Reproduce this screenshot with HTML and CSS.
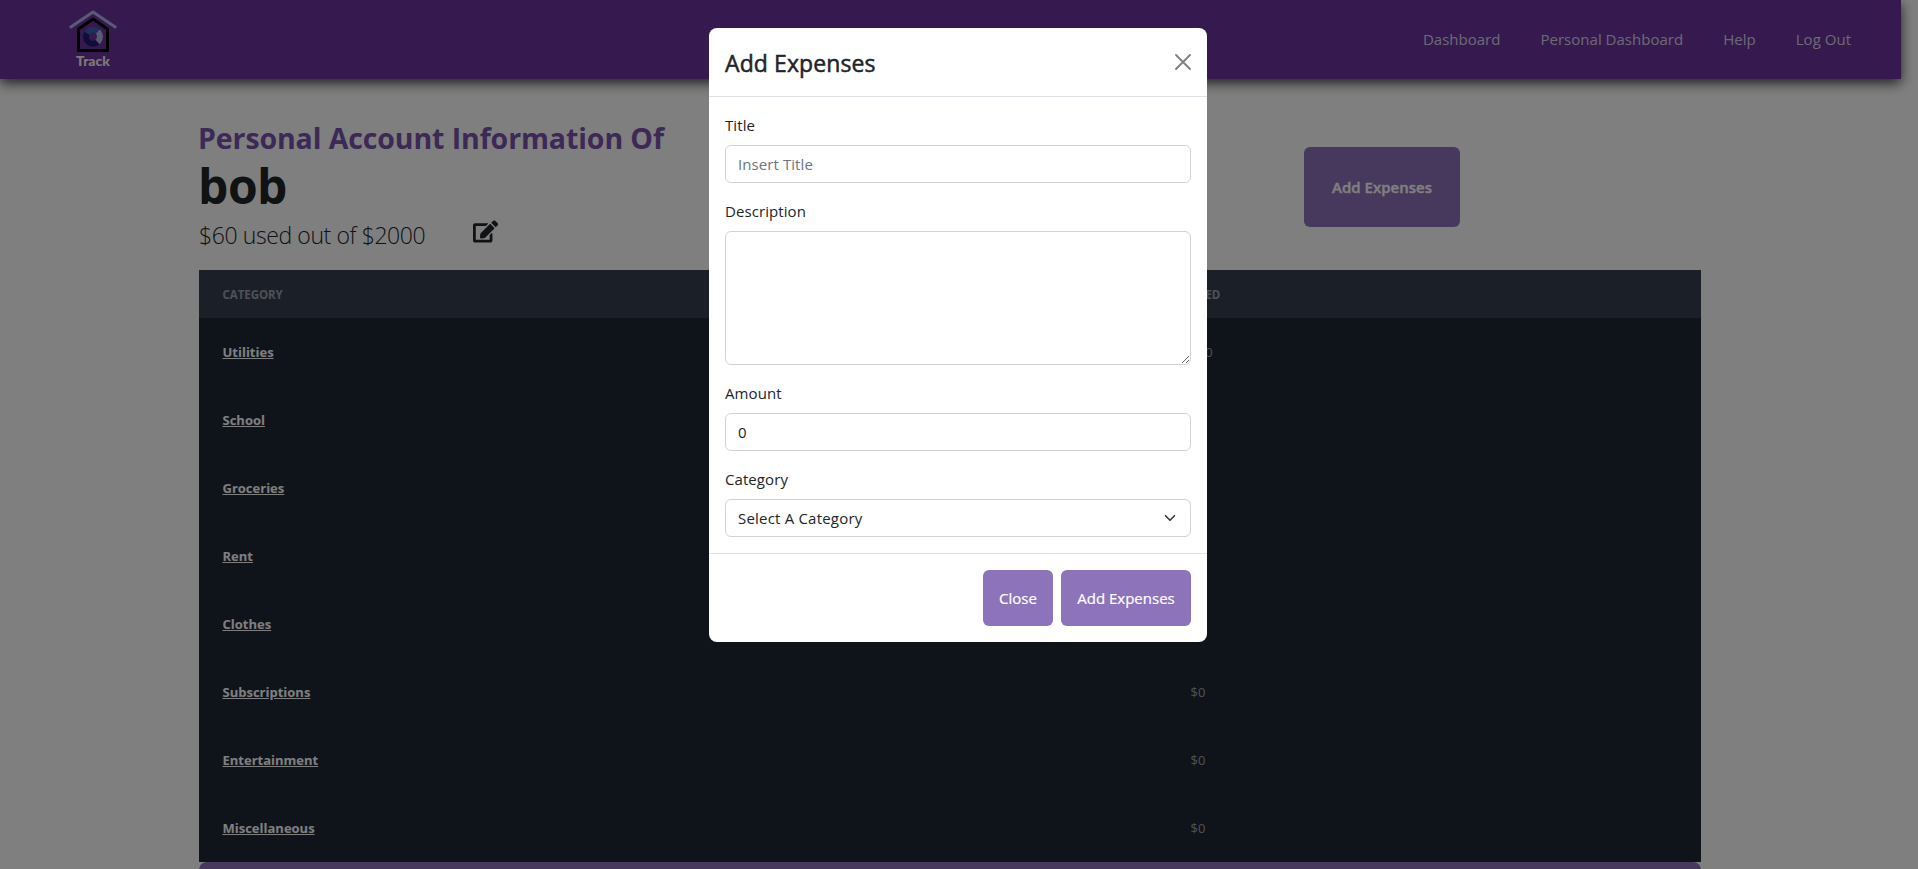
FILE: index.html
```html
<!DOCTYPE html>
<html lang="en">
<head>
<meta charset="utf-8">
<title>Track</title>
<link rel="stylesheet" href="styles.css">
</head>
<body>
<div class="page">
  <header class="navbar">
    <a class="brand" href="#">
      <svg width="50" height="44" viewBox="0 0 50 44" fill="none">
        <path d="M2.800 19 25 4l22.200 15" stroke="#b4b4ee" stroke-width="3" stroke-linecap="round" stroke-linejoin="round"/>
        <path d="M10.500 42.500V21L25 11l14.500 10v21.500z" stroke="#000" stroke-width="3" stroke-linejoin="round"/>
        <g stroke-width="6">
          <circle cx="25" cy="28.700" r="7" stroke="#1f1c70"/>
          <path d="M18.900 25.200A7 7 0 0 1 30 23.800" stroke="#3c60b8"/>
          <path d="M29.800 23.600A7 7 0 0 1 29.500 34" stroke="#b4b4ee"/>
        </g>
      </svg>
      <span class="brand-name">Track</span>
    </a>
    <nav class="links">
      <a href="#">Dashboard</a>
      <a href="#">Personal Dashboard</a>
      <a href="#">Help</a>
      <a href="#">Log Out</a>
    </nav>
  </header>
  <main class="account">
    <section class="summary">
      <div class="info">
        <h2 class="subtitle">Personal Account Information Of</h2>
        <h1 class="user">bob</h1>
        <div class="budget">
          <span class="usage">$60 used out of $2000</span>
          <svg class="edit" width="25" height="23" viewBox="0 0 576 512" fill="#212529"><path d="M402.600 83.200l90.200 90.200c3.800 3.800 3.800 10 0 13.800L274.400 405.600l-92.800 10.300c-12.400 1.400-22.900-9.100-21.500-21.500l10.300-92.800L388.800 83.200c3.800-3.800 10-3.800 13.800 0zm162-22.900l-48.800-48.800c-15.200-15.200-39.900-15.200-55.200 0l-35.400 35.400c-3.800 3.800-3.800 10 0 13.800l90.200 90.200c3.800 3.800 10 3.800 13.800 0l35.400-35.400c15.200-15.300 15.200-40 0-55.200zM384 346.200V448H64V128h229.800c3.200 0 6.200-1.300 8.500-3.500l40-40c7.600-7.600 2.200-20.500-8.500-20.500H48C21.500 64 0 85.500 0 112v352c0 26.500 21.500 48 48 48h352c26.500 0 48-21.500 48-48V306.200c0-10.700-12.900-16-20.500-8.500l-40 40c-2.200 2.300-3.500 5.300-3.500 8.500z"/></svg>
        </div>
      </div>
      <button class="btn-main">Add Expenses</button>
    </section>
    <table class="expenses">
      <thead><tr><th>Category</th><th class="used">Used</th></tr></thead>
      <tbody>
        <tr><td><a href="#">Utilities</a></td><td>$60</td></tr>
        <tr><td><a href="#">School</a></td><td>$0</td></tr>
        <tr><td><a href="#">Groceries</a></td><td>$0</td></tr>
        <tr><td><a href="#">Rent</a></td><td>$0</td></tr>
        <tr><td><a href="#">Clothes</a></td><td>$0</td></tr>
        <tr><td><a href="#">Subscriptions</a></td><td>$0</td></tr>
        <tr><td><a href="#">Entertainment</a></td><td>$0</td></tr>
        <tr><td><a href="#">Miscellaneous</a></td><td>$0</td></tr>
      </tbody>
    </table>
    <div class="panel"></div>
  </main>
</div>
<div class="backdrop">
  <form class="modal">
    <div class="modal-header">
      <h5 class="modal-title">Add Expenses</h5>
      <svg class="close" width="16" height="16" viewBox="0 0 16 16" stroke="#808080" stroke-width="1.900" stroke-linecap="round"><path d="M1 1l14 14M15 1 1 15"/></svg>
    </div>
    <div class="modal-body">
      <label class="field"><span>Title</span><input class="control" placeholder="Insert Title"></label>
      <label class="field"><span>Description</span><textarea class="control area"></textarea></label>
      <label class="field"><span>Amount</span><input class="control" value="0"></label>
      <label class="field"><span>Category</span>
        <span class="control select"><span>Select A Category</span>
          <svg width="12" height="12" viewBox="0 0 12 12" fill="none" stroke="#343a40" stroke-width="1.600" stroke-linecap="round" stroke-linejoin="round"><path d="M1.500 3.700 6 8.300l4.500-4.600"/></svg>
        </span>
      </label>
    </div>
    <div class="modal-footer">
      <button type="button" class="btn b-close">Close</button>
      <button type="button" class="btn b-add">Add Expenses</button>
    </div>
  </form>
</div>
</body>
</html>
```
FILE: styles.css
```css
* { box-sizing: border-box; }
html, body { margin: 0; height: 869px; overflow: hidden; }
body { font-family: "Open Sans", "Noto Sans", sans-serif; font-size: 15px; line-height: 24px; color: #212529; background: #fff; }
h1, h2, h5 { margin: 0; }
button, input, textarea { font: inherit; letter-spacing: inherit; }
.page { height: 869px; overflow: hidden; }
.navbar { width: 1901px; height: 79px; background: #6b339f; display: flex; justify-content: space-between; align-items: center; padding: 0 50px 0 68px; box-shadow: 0 4px 12px rgba(0,0,0,.75); }
.brand { width: 50px; display: flex; flex-direction: column; align-items: center; text-decoration: none; height: 79px; padding-top: 8px; }
.brand-name { font: 900 14px/16px Lato, sans-serif; color: #f4f4ee; margin-top: 1px; }
.links { display: flex; gap: 40px; padding-bottom: 2px; }
.links a { color: #dcd3e6; text-decoration: none; letter-spacing: .02px; }
.account { width: 1502px; margin: 0 0 0 199px; padding-top: 41px; }
.summary { display: flex; height: 150px; }
.info { width: 1105px; }
.subtitle { font-size: 28.500px; line-height: 36px; color: #7b52ab; font-weight: 700; letter-spacing: -.1px; margin-left: -1px; }
.user { font-size: 48px; line-height: 60px; font-weight: 700; letter-spacing: -.5px; margin-left: -1px; }
.budget { display: flex; align-items: center; height: 36px; gap: 48px; }
.usage { font-size: 23px; font-weight: 300; white-space: nowrap; letter-spacing: -.4px; padding-top: 2px; }
.edit { margin-bottom: 6px; }
.btn-main { width: 156px; height: 80px; margin-top: 27px; border: 0; border-radius: 6px; background: #8c73ba; color: #fff; font-weight: 600; -webkit-text-stroke: .35px #fff; }
.expenses { width: 1502px; border-collapse: collapse; table-layout: fixed; background: #1f2937; color: #9ca3af; font-size: 13px; }
.expenses th { width: 968px; height: 48px; padding: 1px 24px 0 23.500px; text-align: left; font-size: 11.500px; text-transform: uppercase; background: #374151; letter-spacing: -.05px; }
.expenses th.used { width: 534px; }
.expenses td { height: 68px; padding: 0 24px 0 23.500px; }
.expenses a { color: #fff; font-weight: 700; }
.panel { height: 40px; border-radius: 8px; background: #8c73ba; }
.backdrop { position: absolute; inset: 0; background: rgba(0,0,0,.5); }
.modal { width: 498px; height: 614px; margin: 28px 0 0 709px; background: #fff; border-radius: 8px; overflow: hidden; }
.modal-header { height: 69px; border-bottom: 1px solid #dee2e6; padding: 0 16px; display: flex; justify-content: space-between; align-items: center; }
.modal-title { font-size: 23px; font-weight: 500; padding-top: 2px; letter-spacing: .1px; -webkit-text-stroke: .5px #212529; }
.modal-body { padding: 16px; display: flex; flex-direction: column; gap: 16px; height: 456px; }
.field { display: flex; flex-direction: column; gap: 8px; line-height: 24px; letter-spacing: .08px; }
.control { width: 466px; height: 38px; border: 1px solid #ced4da; border-radius: 6px; padding: 6px 12px; color: #212529; background: #fff; outline: 0; }
.control::placeholder { color: #6c757d; }
.area { height: 134px; display: block; }
.select { display: flex; align-items: center; justify-content: space-between; padding-right: 14px; letter-spacing: .2px; }
.modal-footer { border-top: 1px solid #dee2e6; padding: 16px; display: flex; justify-content: flex-end; gap: 8px; }
.btn { height: 56px; border: 0; border-radius: 6px; background: #8c73ba; color: #fff; font-weight: 500; padding: 0; -webkit-text-stroke: .2px #fff; }
.b-close { width: 70px; }
.b-add { width: 130px; }
```
